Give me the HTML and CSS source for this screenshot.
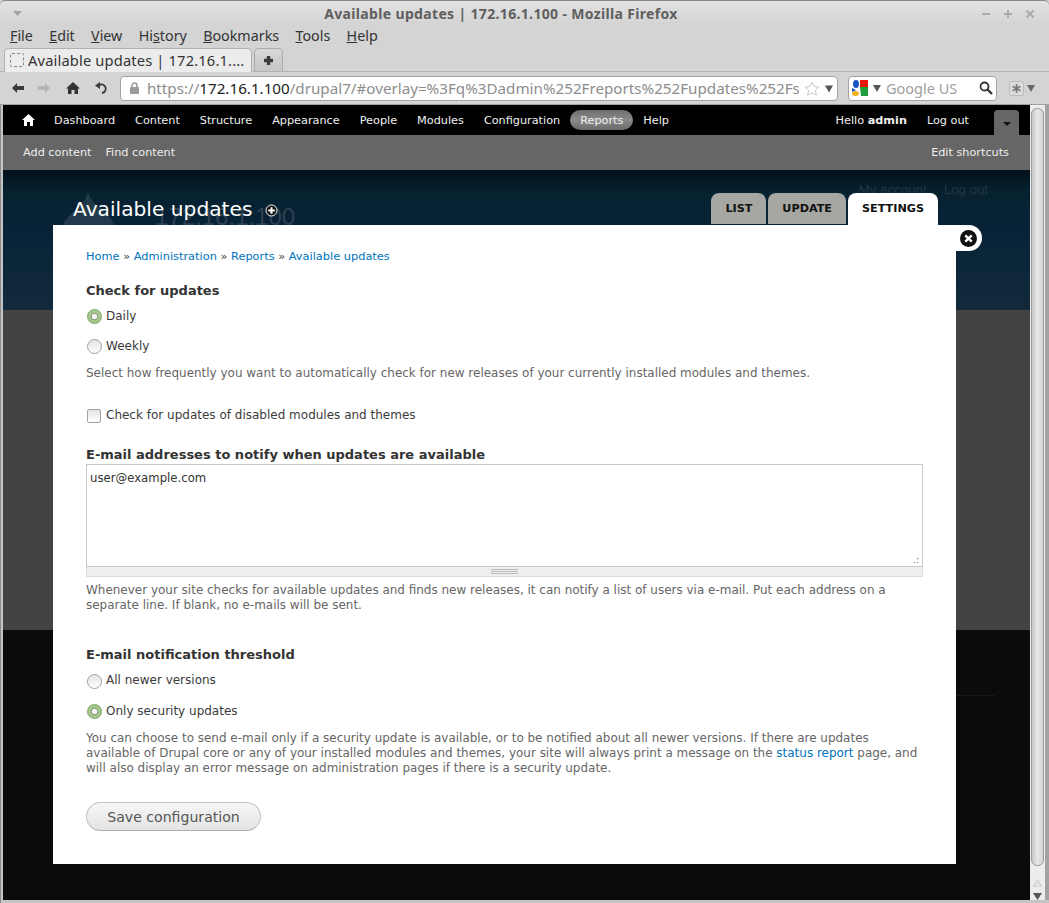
FILE: index.html
```html
<!DOCTYPE html>
<html lang="en">
<head>
<meta charset="utf-8">
<title>Available updates | 172.16.1.100 - Mozilla Firefox</title>
<link rel="stylesheet" href="styles.css">
</head>
<body>
<div class="window">
  <header class="titlebar">
    <svg class="win-menu" width="9" height="5" viewBox="0 0 9 5"><path d="M0 0h9L4.500 5z" fill="#a5a5a5"/></svg>
    <div class="win-title">Available updates | 172.16.1.100 - Mozilla Firefox</div>
    <div class="win-btns">
      <svg width="10" height="10" viewBox="0 0 10 10"><path d="M1 5h8" stroke="#aaa" stroke-width="2"/></svg>
      <svg width="10" height="10" viewBox="0 0 10 10"><path d="M1 5h8M5 1v8" stroke="#aaa" stroke-width="2"/></svg>
      <svg width="10" height="10" viewBox="0 0 10 10"><path d="M1.500 1.500l7 7M8.500 1.500l-7 7" stroke="#aaa" stroke-width="2"/></svg>
    </div>
  </header>
  <nav class="menubar">
    <span><u>F</u>ile</span><span><u>E</u>dit</span><span><u>V</u>iew</span><span>Hi<u>s</u>tory</span><span><u>B</u>ookmarks</span><span><u>T</u>ools</span><span><u>H</u>elp</span>
  </nav>
  <div class="tabstrip">
    <div class="ff-tab"><span class="favicon"></span><span class="ff-tab-label">Available updates | 172.16.1....</span></div>
    <div class="ff-newtab"><svg width="11" height="11" viewBox="0 0 11 11"><path d="M5.500 1v9M1 5.500h9" stroke="#3c3c3c" stroke-width="3.400"/></svg></div>
  </div>
  <div class="navbar">
    <svg class="nav-back" width="12" height="10" viewBox="0 0 12 10"><path d="M0 5l5-5v3h7v4H5v3z" fill="#3a3a3a"/></svg>
    <svg class="nav-fwd" width="12" height="10" viewBox="0 0 12 10"><path d="M12 5L7 0v3H0v4h7v3z" fill="#b4b4b4"/></svg>
    <svg class="nav-home" width="14" height="12" viewBox="0 0 14 12"><path d="M7 0l7 6.500h-2V12H8.500V8h-3v4H2V6.500H0z" fill="#333"/></svg>
    <svg class="nav-reload" width="13" height="12" viewBox="0 0 13 12"><path d="M4 3.200A4.300 4.300 0 1 1 7 11" fill="none" stroke="#3a3a3a" stroke-width="1.800"/><path d="M0 3.500l5-3.500v7z" fill="#3a3a3a"/></svg>
    <div class="urlbar">
      <svg width="11" height="12" viewBox="0 0 11 12"><rect x="1" y="5" width="9" height="7" rx="1" fill="#9a9a9a"/><path d="M3 6V3.500a2.500 2.500 0 0 1 5 0V6" fill="none" stroke="#9a9a9a" stroke-width="1.500"/></svg>
      <div class="url-text">https://<b>172.16.1.100</b>/drupal7/#overlay=%3Fq%3Dadmin%252Freports%252Fupdates%252Fs</div>
      <svg width="16" height="15" viewBox="0 0 16 15"><path d="M8 1l2.100 4.500 4.900.6-3.600 3.300 1 4.800L8 11.800l-4.400 2.400 1-4.800L1 6.100l4.900-.6z" fill="#fff" stroke="#c8c8c8"/></svg>
      <svg width="8" height="9" viewBox="0 0 9 9"><path d="M0 1h9L4.500 9z" fill="#555"/></svg>
    </div>
    <div class="searchbar">
      <svg width="16" height="16" viewBox="0 0 16 16"><rect width="16" height="16" fill="#fff"/><path d="M8 0h8v7H8z" fill="#e3170a"/><path d="M8 7h8v9H9z" fill="#1e9e3b"/><ellipse cx="4" cy="4" rx="3" ry="4" fill="#1a55c4"/><path d="M0 8l4 2-4 2z" fill="#1a55c4"/><ellipse cx="3.500" cy="13.500" rx="3.500" ry="2.500" fill="#f0b31c"/></svg>
      <svg width="8" height="8" viewBox="0 0 9 9"><path d="M0 1h9L4.500 9z" fill="#555"/></svg>
      <span class="search-text">Google US</span>
      <svg width="14" height="14" viewBox="0 0 14 14"><circle cx="5.500" cy="5.500" r="4" fill="none" stroke="#333" stroke-width="1.800"/><path d="M8.500 8.500l4.500 4.500" stroke="#333" stroke-width="2.400"/></svg>
    </div>
    <div class="addon"><svg width="15" height="15" viewBox="0 0 15 15"><rect x=".5" y=".5" width="14" height="14" rx="2" fill="#dcdcdc" stroke="#bbb"/><path d="M7.500 3v9M3.600 5.200l7.800 4.600M11.400 5.200L3.600 9.800" stroke="#777" stroke-width="1.600"/></svg><svg width="8" height="8" viewBox="0 0 9 9"><path d="M0 1h9L4.500 9z" fill="#666"/></svg></div>
  </div>
  <div class="viewport">
    <main class="page">
      <div class="toolbar">
        <svg class="home" width="13" height="12" viewBox="0 0 13 12"><path d="M6.500 0L13 6h-2v6H8V8H5v4H2V6H0z" fill="#fff"/></svg>
        <a>Dashboard</a><a>Content</a><a>Structure</a><a>Appearance</a><a>People</a><a>Modules</a><a>Configuration</a><a class="active">Reports</a><a>Help</a>
        <span class="spacer"></span>
        <span class="hello">Hello <b>admin</b></span><a class="logout">Log out</a>
        <span class="drawer"><svg width="8" height="4" viewBox="0 0 8 4"><path d="M0 0h8L4 4z" fill="#111"/></svg></span>
      </div>
      <div class="shortcuts">
        <a>Add content</a><a>Find content</a><span class="spacer"></span><a>Edit shortcuts</a>
      </div>
      <div class="site-header"></div>
      <div class="site-middle"></div>
      <div class="site-footer"><div class="footer-line"></div></div>
      <div class="ghost-links"><span>My account</span><span>Log out</span></div>
      <div class="ghost-name">172.16.1.100</div>
      <svg class="ghost-logo" width="56" height="70" viewBox="0 0 56 70"><path d="M28 0C30 9 38 14 45 20C52 27 56 34 56 44A28 26 0 0 1 0 44C0 34 6 27 13 20C20 14 26 9 28 0z" fill="#fff" fill-opacity=".11"/></svg>
    </main>
    <aside class="scrollbar">
      <div class="thumb"></div>
      <svg width="9" height="7" viewBox="0 0 9 7"><path d="M4.500 0L9 7H0z" fill="#e4e4e4" stroke="#c4c4c4"/></svg>
      <svg width="9" height="7" viewBox="0 0 9 7"><path d="M0 0h9L4.500 7z" fill="#555"/></svg>
    </aside>
  </div>
  <section class="overlay">
    <div class="overlay-head">
      <h1>Available updates</h1>
      <svg class="add-short" width="13" height="13" viewBox="0 0 13 13"><circle cx="6.500" cy="6.500" r="5.500" fill="#111" stroke="#fff"/><path d="M6.500 3.200v6.600M3.200 6.500h6.600" stroke="#fff" stroke-width="2"/></svg>
      <div class="tabs"><a>LIST</a><a>UPDATE</a><a class="current">SETTINGS</a></div>
    </div>
    <div class="close-wrap">
      <div class="panel">
        <div class="breadcrumb"><a>Home</a> » <a>Administration</a> » <a>Reports</a> » <a>Available updates</a></div>
        <form class="form">
          <div class="group g-check">
            <div class="label">Check for updates</div>
            <div class="opt opt-first"><span class="radio on"></span>Daily</div>
            <div class="opt"><span class="radio"></span>Weekly</div>
            <div class="desc">Select how frequently you want to automatically check for new releases of your currently installed modules and themes.</div>
          </div>
          <div class="opt check-row"><span class="check"></span>Check for updates of disabled modules and themes</div>
          <div class="group g-mail">
            <div class="label">E-mail addresses to notify when updates are available</div>
            <div class="textarea">user@example.com<span class="corner">.:</span></div>
            <div class="grip"><span></span></div>
            <div class="desc">Whenever your site checks for available updates and finds new releases, it can notify a list of users via e-mail. Put each address on a separate line. If blank, no e-mails will be sent.</div>
          </div>
          <div class="group g-thresh">
            <div class="label">E-mail notification threshold</div>
            <div class="opt opt-first"><span class="radio"></span>All newer versions</div>
            <div class="opt"><span class="radio on"></span>Only security updates</div>
            <div class="desc">You can choose to send e-mail only if a security update is available, or to be notified about all newer versions. If there are updates available of Drupal core or any of your installed modules and themes, your site will always print a message on the <a>status report</a> page, and will also display an error message on administration pages if there is a security update.</div>
          </div>
          <button class="save" type="button">Save configuration</button>
        </form>
      </div>
      <div class="close"><svg width="17" height="17" viewBox="0 0 17 17"><circle cx="8.500" cy="8.500" r="8.500" fill="#111"/><path d="M5.300 5.300l6.400 6.400M11.700 5.300l-6.400 6.400" stroke="#fff" stroke-width="2.400"/></svg></div>
    </div>
  </section>
</div>
</body>
</html>
```
FILE: styles.css
```css
* { box-sizing: border-box; }
html, body { margin: 0; height: 100%; overflow: hidden; }
body { font-family: "DejaVu Sans", sans-serif; background: #d4d4d4; }
.window { position: relative; width: 1049px; height: 903px; display: flex; flex-direction: column; background: #d4d4d4; border-radius: 5px 5px 0 0; font-family: "Noto Sans", sans-serif; color: #3c3c3c; }
.titlebar { height: 24px; flex: none; display: flex; align-items: center; position: relative; padding: 2px 14px 0 13px; background: linear-gradient(#e2e2e2, #d4d4d4); border-top: 1px solid #8a8a8a; border-radius: 5px 5px 0 0; }
.win-menu { flex: none; }
.win-title { flex: 1; text-align: center; font-size: 14px; letter-spacing: .34px; font-weight: 700; color: #5f5f5f; padding-right: 1px; }
.win-btns { display: flex; gap: 12px; }
.menubar { height: 23px; flex: none; display: flex; gap: 16.300px; align-items: center; padding-left: 10px; font-size: 14.300px; color: #333; }
.tabstrip { height: 25px; flex: none; display: flex; align-items: flex-end; padding-left: 4px; gap: 2px; border-bottom: 1px solid #b4b4b4; }
.ff-tab { width: 248px; height: 24px; margin-bottom: -1px; background: #ececec; border: 1px solid #b0b0b0; border-bottom: 0; border-radius: 5px 5px 0 0; display: flex; align-items: center; gap: 4px; padding: 0 0 1px 5px; font-size: 14.700px; letter-spacing: .15px; color: #333; }
.favicon { width: 14px; height: 14px; border: 1px dashed #888; border-radius: 2px; flex: none; }
.ff-tab-label { white-space: nowrap; }
.ff-newtab { width: 29px; height: 23px; background: linear-gradient(#d8d8d8, #c6c6c6); border: 1px solid #aaa; border-bottom: 0; border-radius: 5px 5px 0 0; display: flex; align-items: center; justify-content: center; }
.navbar { height: 33px; flex: none; display: flex; align-items: center; padding-left: 12px; background: #d4d4d4; border-bottom: 1px solid #a0a0a0; }
.nav-back { flex: none; margin-right: 14px; }
.nav-fwd { flex: none; margin-right: 16px; }
.nav-home { flex: none; margin-right: 15px; }
.nav-reload { flex: none; margin-right: 12px; }
.urlbar { width: 718px; height: 25px; background: #fff; border: 1px solid #a4a4a4; border-radius: 4px; display: flex; align-items: center; padding: 0 4px 0 8px; gap: 5px; flex: none; }
.url-text { width: 654px; margin-left: 2px; overflow: hidden; white-space: nowrap; font-size: 15.200px; color: #8d8d8d; }
.url-text b { font-weight: 400; color: #222; }
.searchbar { width: 149px; height: 25px; margin-left: 10px; background: #fff; border: 1px solid #a4a4a4; border-radius: 4px; display: flex; align-items: center; padding: 0 3px; gap: 5px; flex: none; }
.search-text { flex: 1; color: #a0a0a0; font-size: 14.500px; }
.addon { display: flex; align-items: center; gap: 3px; margin-left: 12px; }
.viewport { flex: 1; min-height: 0; display: flex; padding: 0 0 3px 2px; background: #c4c4c4; border-left: 1px solid #8c8c8c; }
.page { position: relative; width: 1027px; flex: none; display: flex; flex-direction: column; background: #0c0c0c; overflow: hidden; color: #fff; font-family: "DejaVu Sans", sans-serif; }
.toolbar { height: 30px; flex: none; background: #000; display: flex; align-items: center; font-size: 11.250px; padding-left: 19px; color: #f0f0f0; }
.toolbar .home { margin-right: 9px; }
.toolbar a { padding: 0 10px; height: 20px; line-height: 21px; border-radius: 10px; }
.toolbar a.active { background: linear-gradient(#6e6e6e, #8a8a8a 50%, #6a6a6a); }
.spacer { flex: 1; }
.hello { margin-right: 10px; padding-top: 1px; }
.toolbar a.logout { margin-right: 5px; }
.drawer { width: 25px; height: 25px; margin: 5px 11px 0 10px; align-self: flex-end; background: #666; border-radius: 4px 4px 0 0; display: flex; align-items: center; justify-content: center; padding-top: 3px; }
.shortcuts { height: 35px; flex: none; background: #666; display: flex; align-items: center; gap: 14px; font-size: 11.250px; padding: 0 21px 0 20px; color: #eee; }
.site-header { height: 140px; flex: none; background: linear-gradient(#02101a, #06212f 15%, #082338 45%, #122a3b); }
.site-middle { height: 320px; flex: none; background: #434343; }
.site-footer { flex: 1; background: #0b0b0b; padding-top: 65px; }
.footer-line { height: 1px; margin: 0 35px 0 60px; background: #181818; }
.ghost-links { position: absolute; top: 77px; right: 42px; display: flex; gap: 17px; font-family: "Liberation Sans", sans-serif; font-size: 13.300px; color: #233543; }
.ghost-name { position: absolute; top: 98px; left: 152px; font-family: "Liberation Sans", sans-serif; font-size: 24px; color: #2c4150; }
.ghost-logo { position: absolute; top: 87px; left: 57px; }
.scrollbar { flex: 1; display: flex; flex-direction: column; align-items: center; background: #ececec; border-right: 4px solid #a2a2a2; }
.thumb { width: 13px; flex: 1; margin: 3px 0 8px; background: linear-gradient(90deg, #c8c8c8, #e8e8e8 50%, #d2d2d2); border: 1px solid #9c9c9c; border-radius: 6px; }
.scrollbar svg { margin-top: 6px; flex: none; }
.overlay { position: absolute; left: 53px; top: 193px; width: 929px; }
.overlay-head { height: 32px; position: relative; display: flex; align-items: center; width: 903px; font-family: "DejaVu Sans", sans-serif; }
.overlay-head h1 { margin: 0 0 0 20px; font-size: 20.200px; font-weight: 400; color: #fff; line-height: 32px; }
.add-short { margin: 2px 0 0 13px; }
.tabs { margin-left: auto; display: flex; align-items: flex-end; gap: 2px; height: 32px; padding-right: 18px; }
.tabs a { height: 31px; background: #a6a6a2; color: #111; font-size: 11.200px; font-weight: 700; padding: 9px 14px 0; border-radius: 8px 8px 0 0; margin-bottom: 1px; }
.tabs a.current { height: 32px; background: #fff; margin-bottom: 0; }
.close-wrap { position: relative; }
.panel { width: 903px; height: 639px; background: #fff; padding: 25px 33px 0; font-family: "DejaVu Sans", sans-serif; color: #3b3b3b; font-size: 12px; }
.close { position: absolute; left: 903px; top: 0; width: 26px; height: 26px; background: #fff; border-radius: 0 13px 13px 0; display: flex; align-items: center; justify-content: flex-start; padding-left: 4px; }
.breadcrumb { font-size: 11.370px; line-height: 13px; color: #444; }
.breadcrumb a, .desc a { color: #0074bd; }
.form { display: flex; flex-direction: column; }
.label { font-weight: 700; font-size: 13px; line-height: 15px; color: #333; }
.g-check { margin-top: 20px; }
.opt { display: flex; align-items: center; height: 16px; margin-top: 14px; }
.opt-first { margin-top: 10px; }
.radio { width: 15px; height: 15px; flex: none; margin: 0 4px 0 1px; border-radius: 50%; border: 1px solid #a0a0a0; background: linear-gradient(#e4e4e4, #fff); }
.radio.on { border-color: #7fa566; background: radial-gradient(circle, #f4f4f4 0 2.600px, #7c8a72 3.200px, #a8cc90 4.200px, #9fc588 7px); }
.check { width: 14px; height: 14px; flex: none; margin: 2px 5px 0 1px; border-radius: 2px; border: 1px solid #a0a0a0; background: linear-gradient(#e4e4e4, #fff); }
.desc { color: #666; font-size: 11.980px; line-height: 15px; margin-top: 12px; }
.desc a { text-decoration: none; }
.check-row { margin-top: 26px; }
.g-mail { margin-top: 24px; }
.textarea { position: relative; height: 103px; margin-top: 2px; border: 1px solid #c8c8c8; padding: 6px 3px; font-size: 11.700px; line-height: 15px; color: #333; font-family: "DejaVu Sans", sans-serif; }
.corner { position: absolute; right: 3px; bottom: 0; font-size: 9px; line-height: 12px; color: #666; }
.grip { height: 10px; background: #eee; border: 1px solid #ddd; border-top: 0; display: flex; align-items: center; justify-content: center; }
.grip span { width: 27px; height: 5px; border-top: 1px solid #bbb; border-bottom: 1px solid #bbb; background: linear-gradient(#eee 1px, #bbb 1px, #bbb 2px, #eee 2px); }
.g-mail .desc { margin-top: 6px; }
.g-thresh { margin-top: 34px; }
.g-thresh .opt-first { margin-top: 10px; }
.g-thresh .opt-first .radio { margin-top: 3px; }
.g-thresh .opt-first + .opt { margin-top: 15px; }
.g-thresh .desc { margin-top: 12px; }
.save { align-self: flex-start; margin-top: 26px; width: 175px; height: 29px; border-radius: 15px; border: 1px solid #c4c4c4; border-bottom-color: #b0b0b0; background: linear-gradient(#f6f6f6, #e4e4e4); font-family: "DejaVu Sans", sans-serif; font-size: 14.100px; color: #555; padding: 0; }
```
